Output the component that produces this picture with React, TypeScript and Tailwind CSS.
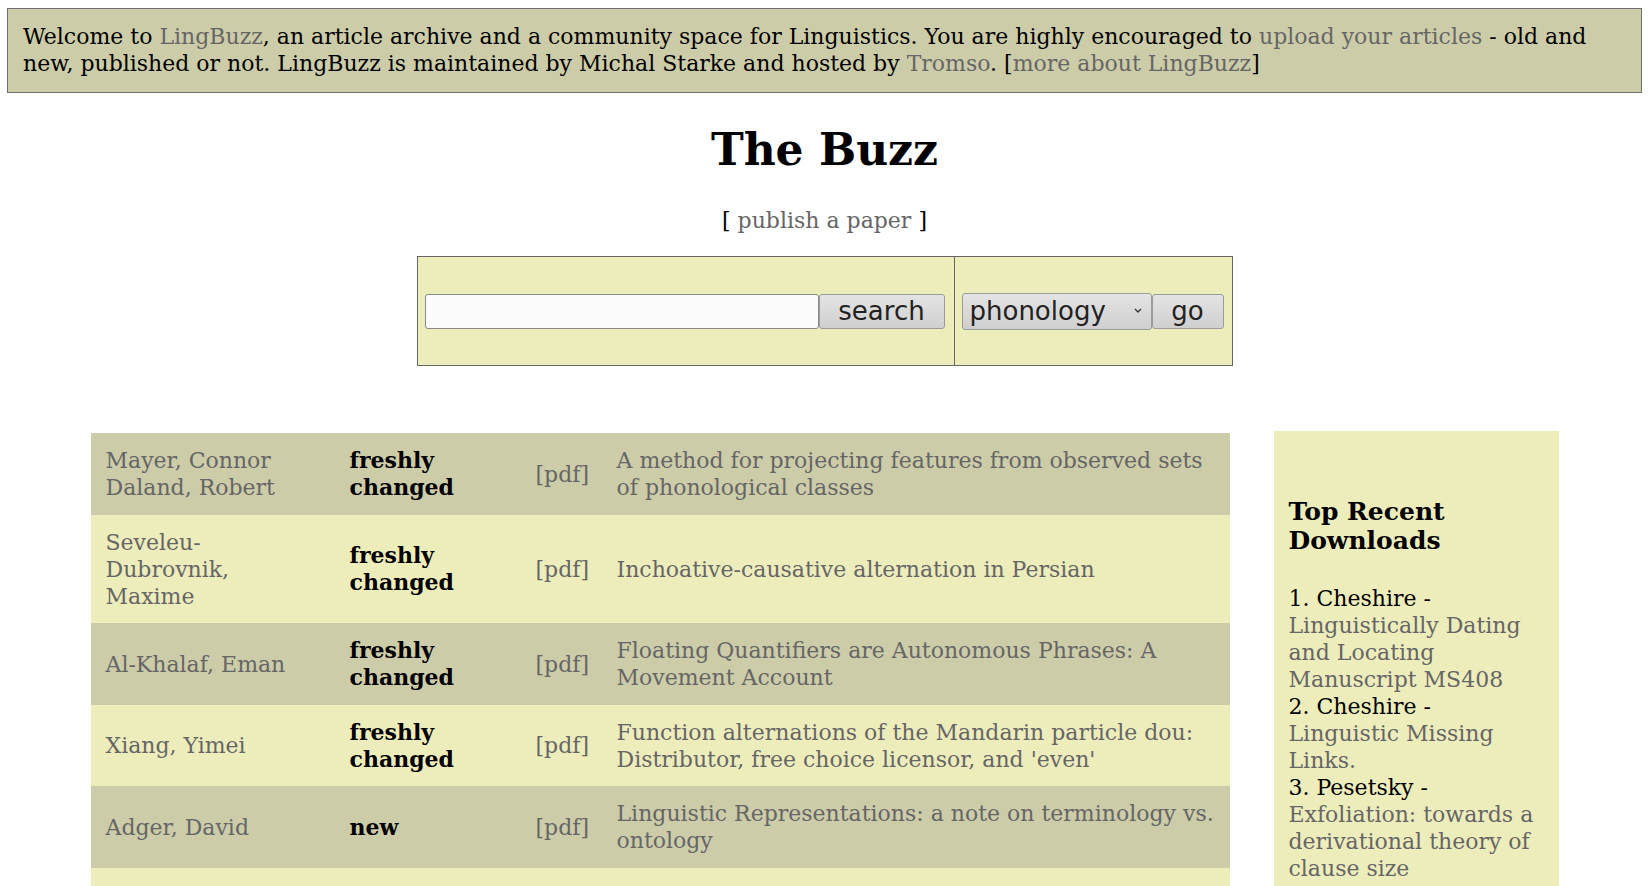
import React from "react";

const rows = [
  { authors: ["Mayer, Connor", "Daland, Robert"], status: "freshly changed", title: "A method for projecting features from observed sets of phonological classes" },
  { authors: ["Seveleu-Dubrovnik, Maxime"], status: "freshly changed", title: "Inchoative-causative alternation in Persian" },
  { authors: ["Al-Khalaf, Eman"], status: "freshly changed", title: "Floating Quantifiers are Autonomous Phrases: A Movement Account" },
  { authors: ["Xiang, Yimei"], status: "freshly changed", title: "Function alternations of the Mandarin particle dou: Distributor, free choice licensor, and 'even'" },
  { authors: ["Adger, David"], status: "new", title: "Linguistic Representations: a note on terminology vs. ontology" },
  { authors: ["Smith, Jennifer"], status: "new", title: "Phonological interactions and the typology of positional effects" },
];

const sans = "font-['DejaVu_Sans',sans-serif] text-[26px] text-[#222]";

export default function App() {
  return (
    <div className="min-h-screen bg-white text-black font-['DejaVu_Serif',serif] text-[22px] leading-[27px] pt-2 pl-[7px] pr-[10px]">
      <div className="bg-[#cccca9] border border-[#6f6f6f] pl-[15px] pr-[14px] pt-[14px] pb-[15px]">
        Welcome to <a className="text-[#666666]">LingBuzz</a>, an article archive and a community space for Linguistics. You are highly encouraged to{" "}
        <a className="text-[#666666]">upload your articles</a> - old and new, published or not. LingBuzz is maintained by Michal Starke and hosted by{" "}
        <a className="text-[#666666]">Tromso</a>. [<a className="text-[#666666]">more about LingBuzz</a>]
      </div>

      <h1 className="text-center font-bold text-[44px] leading-[52px] mt-[31px]">The Buzz</h1>
      <div className="text-center mt-[31px]">
        [ <a className="text-[#666666]">publish a paper</a> ]
      </div>

      <div className="flex justify-center mt-[22px]">
        <div className="flex border border-[#666666] bg-[#ededbb] h-[110px]">
          <div className="flex items-center px-[7px] border-r border-[#666666] w-[537px]">
            <input className="w-[394px] h-[35px] bg-[#fafafa] border border-[#8a8a8a] rounded-[3px]" />
            <button className={`h-[35px] w-[126px] bg-gradient-to-b from-[#e4e4e4] to-[#cfcfcf] border border-[#9a9a9a] rounded-[3px] ${sans}`}>search</button>
          </div>
          <div className="flex items-center px-[7px] w-[277px]">
            <div className={`h-[37px] w-[190px] bg-gradient-to-b from-[#e4e4e4] to-[#cfcfcf] border border-[#9a9a9a] rounded-[3px] flex items-center justify-between pl-[7px] pr-[8px] ${sans}`}>
              <span>phonology</span>
              <svg width="10" height="8" viewBox="0 0 10 8"><path d="M2 2 L5 5 L8 2" stroke="#333" strokeWidth="1.3" fill="none" /></svg>
            </div>
            <button className={`h-[35px] w-[72px] bg-gradient-to-b from-[#e4e4e4] to-[#cfcfcf] border border-[#9a9a9a] rounded-[3px] ${sans}`}>go</button>
          </div>
        </div>
      </div>

      <div className="flex justify-center gap-[44px] mt-[65px]">
        <div className="w-[1139px] mt-[2px]">
          {rows.map((r, i) => (
            <div key={i} className={`flex items-center pt-[14px] pb-[13.6px] ${i % 2 === 0 ? "bg-[#cccca9]" : "bg-[#ededbb]"}`}>
              <div className="w-[259px] pl-[15px] pr-[60px] text-[#666666]">
                {r.authors.map((a, j) => (
                  <div key={j}>{a}</div>
                ))}
              </div>
              <div className="w-[186px] font-bold pr-[10px]">
                {r.status === "freshly changed" ? (
                  <>
                    <div>freshly</div>
                    <div>changed</div>
                  </>
                ) : (
                  r.status
                )}
              </div>
              <div className="w-[81px] text-[#666666]">[pdf]</div>
              <div className="flex-1 pr-[12px] text-[#666666]">{r.title}</div>
            </div>
          ))}
        </div>
        <div className="w-[285px] bg-[#ededbb] px-[15px] pt-[66px]">
          <h3 className="font-bold text-[25px] leading-[29px]">Top Recent Downloads</h3>
          <div className="mt-[30px]">
            <div>1. Cheshire - <a className="text-[#666666]">Linguistically Dating and Locating Manuscript MS408</a></div>
            <div>2. Cheshire - <a className="text-[#666666]">Linguistic Missing Links.</a></div>
            <div>3. Pesetsky - <a className="text-[#666666]">Exfoliation: towards a derivational theory of clause size</a></div>
            <div>4. Pesetsky - <a className="text-[#666666]">Linguistic theory</a></div>
          </div>
        </div>
      </div>
    </div>
  );
}
